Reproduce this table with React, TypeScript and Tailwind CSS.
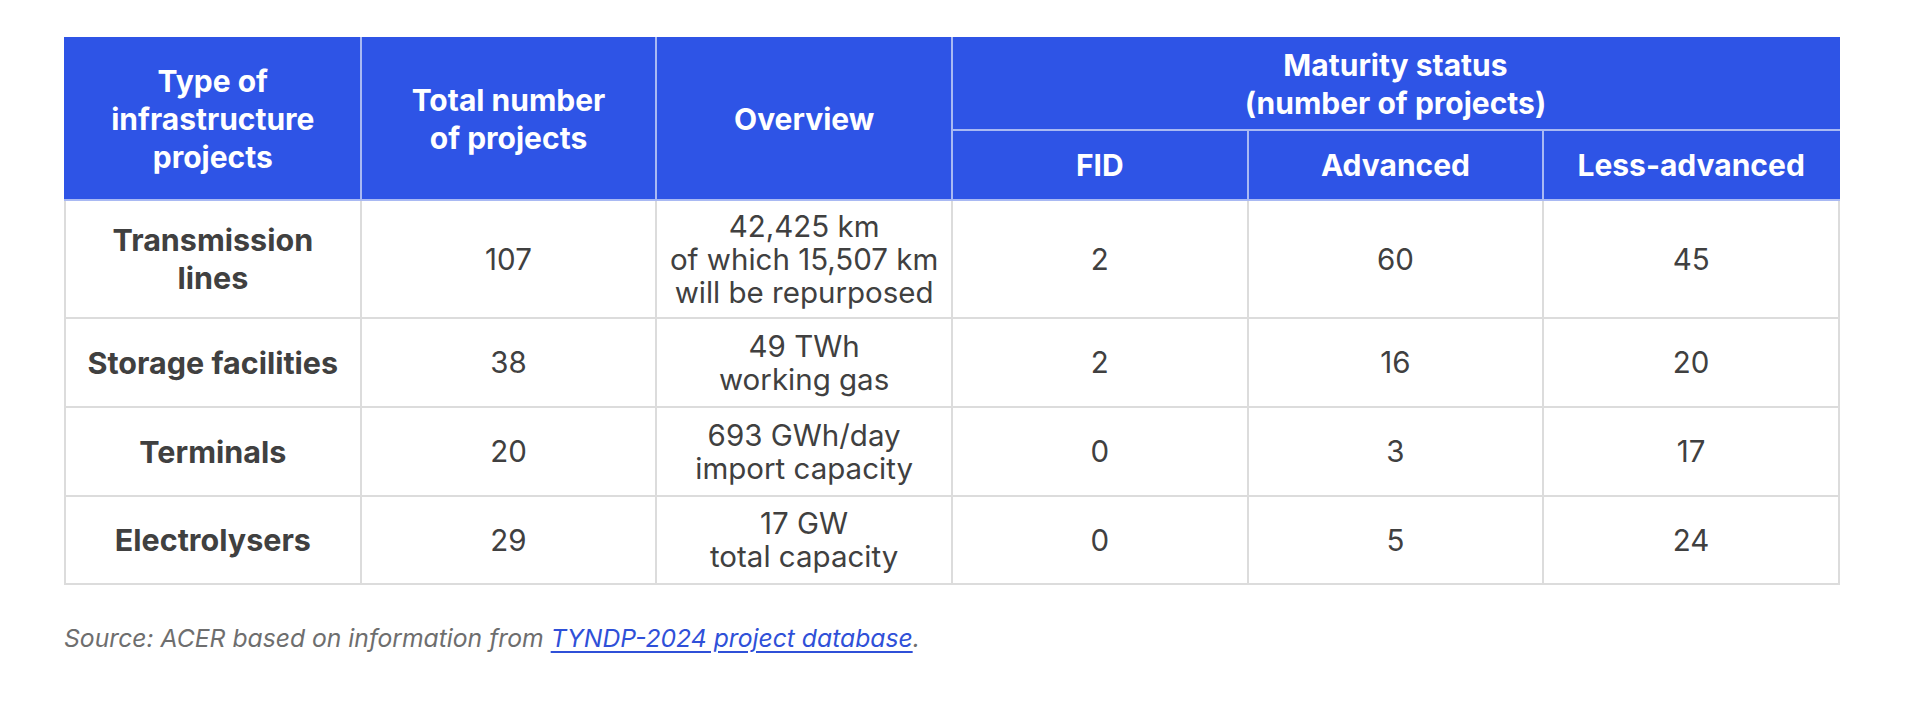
import React from 'react';

type Row = {
  type: string;
  total: string;
  overview: string[];
  fid: string;
  advanced: string;
  less: string;
  h: string;
};

const rows: Row[] = [
  {
    type: 'Transmission lines',
    total: '107',
    overview: ['42,425 km', 'of which 15,507 km', 'will be repurposed'],
    fid: '2',
    advanced: '60',
    less: '45',
    h: 'h-[118px]',
  },
  {
    type: 'Storage facilities',
    total: '38',
    overview: ['49 TWh', 'working gas'],
    fid: '2',
    advanced: '16',
    less: '20',
    h: 'h-[89px]',
  },
  {
    type: 'Terminals',
    total: '20',
    overview: ['693 GWh/day', 'import capacity'],
    fid: '0',
    advanced: '3',
    less: '17',
    h: 'h-[89px]',
  },
  {
    type: 'Electrolysers',
    total: '29',
    overview: ['17 GW', 'total capacity'],
    fid: '0',
    advanced: '5',
    less: '24',
    h: 'h-[88px]',
  },
];

const th = 'border-2 border-[#a9b9f3] bg-[#2e54e6] text-white font-bold text-center align-middle px-2 whitespace-nowrap';
const td = 'border-2 border-[#dcdcdc] text-center align-middle px-1 whitespace-nowrap text-[#404040]';

export default function App() {
  return (
    <div className="min-h-[711px] bg-white pl-[64px] pt-[37px] font-['Inter','Liberation_Sans',sans-serif]">
      <table className="w-[1776px] table-fixed border-collapse">
        <thead className="text-[30px] leading-[38px]">
          <tr className="h-[92px]">
            <th rowSpan={2} className={`${th} border-t-[#2e54e6] border-l-[#2e54e6]`}>
              Type of
              <br />
              infrastructure
              <br />
              projects
            </th>
            <th rowSpan={2} className={`${th} border-t-[#2e54e6]`}>
              Total number
              <br />
              of projects
            </th>
            <th rowSpan={2} className={`${th} border-t-[#2e54e6]`}>
              Overview
            </th>
            <th colSpan={3} className={`${th} border-t-[#2e54e6] border-r-[#2e54e6]`}>
              Maturity status
              <br />
              (number of projects)
            </th>
          </tr>
          <tr className="h-[70px]">
            <th className={th}>FID</th>
            <th className={th}>Advanced</th>
            <th className={`${th} border-r-[#2e54e6]`}>Less-advanced</th>
          </tr>
        </thead>
        <tbody className="text-[29.5px] leading-[33px]">
          {rows.map((r) => (
            <tr key={r.type} className={r.h}>
              <td className={`${td} font-bold text-[30.5px] text-[#363636] leading-[38px]`}>
                {r.type === 'Transmission lines' ? (
                  <>
                    Transmission
                    <br />
                    lines
                  </>
                ) : (
                  r.type
                )}
              </td>
              <td className={td}>{r.total}</td>
              <td className={td}>
                {r.overview.map((line) => (
                  <div key={line}>{line}</div>
                ))}
              </td>
              <td className={td}>{r.fid}</td>
              <td className={td}>{r.advanced}</td>
              <td className={td}>{r.less}</td>
            </tr>
          ))}
        </tbody>
      </table>

      <p className="mt-[35px] text-[24.7px] italic text-[#6e6e6e]">
        Source: ACER based on information from{' '}
        <a href="#" className="text-[#2f50d8] underline underline-offset-4">
          TYNDP-2024 project database
        </a>
        .
      </p>
    </div>
  );
}
